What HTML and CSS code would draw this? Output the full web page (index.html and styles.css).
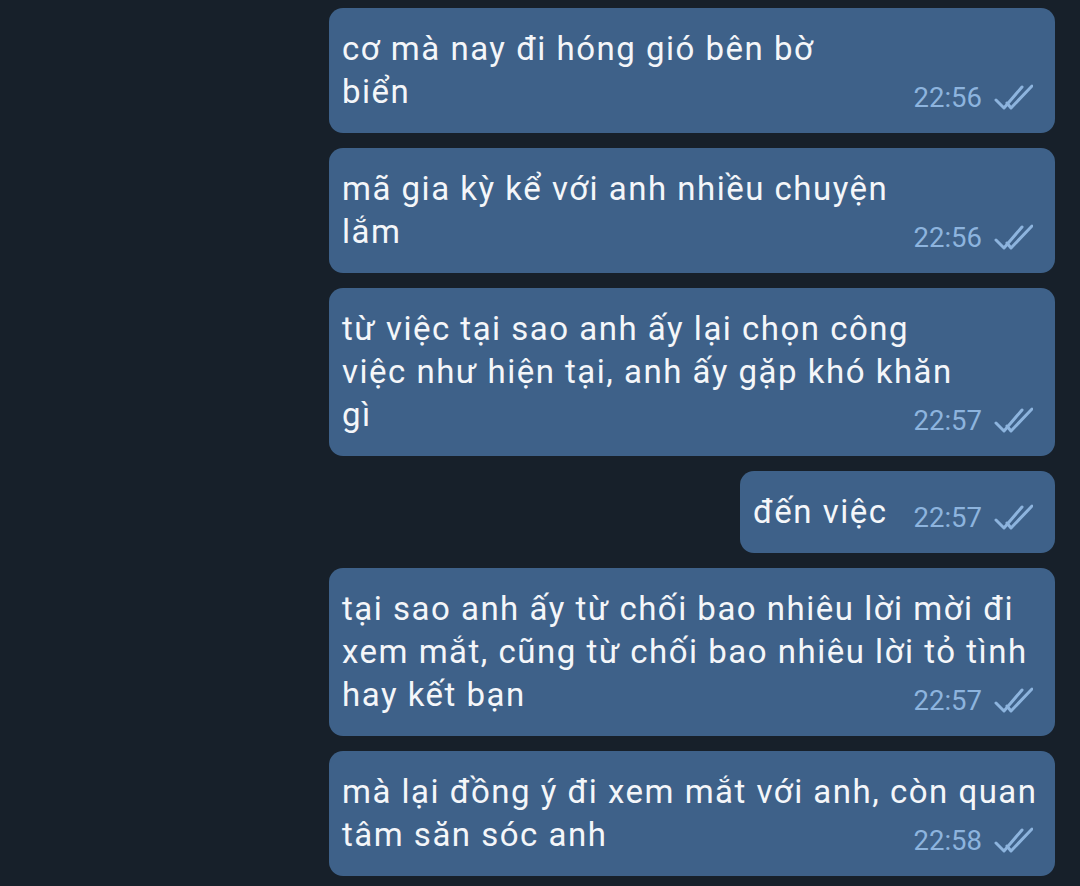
FILE: index.html
```html
<!DOCTYPE html>
<html lang="vi">
<head>
<meta charset="utf-8">
<title>Chat</title>
<link rel="stylesheet" href="styles.css">
</head>
<body>
<div class="chat">
  <div class="msg wide">
    <div class="text"><span class="line">cơ mà nay đi hóng gió bên bờ</span><span class="line">biển</span></div>
    <div class="meta"><span class="time">22:56</span><svg class="ticks" viewBox="0 0 40 26" width="40" height="26"><path d="M3 16 L11 24 L29 3 M14 19 L18 24 L39 2"/></svg></div>
  </div>
  <div class="msg wide">
    <div class="text"><span class="line">mã gia kỳ kể với anh nhiều chuyện</span><span class="line">lắm</span></div>
    <div class="meta"><span class="time">22:56</span><svg class="ticks" viewBox="0 0 40 26" width="40" height="26"><path d="M3 16 L11 24 L29 3 M14 19 L18 24 L39 2"/></svg></div>
  </div>
  <div class="msg wide">
    <div class="text"><span class="line">từ việc tại sao anh ấy lại chọn công</span><span class="line">việc như hiện tại, anh ấy gặp khó khăn</span><span class="line">gì</span></div>
    <div class="meta"><span class="time">22:57</span><svg class="ticks" viewBox="0 0 40 26" width="40" height="26"><path d="M3 16 L11 24 L29 3 M14 19 L18 24 L39 2"/></svg></div>
  </div>
  <div class="msg short">
    <div class="text"><span class="line">đến việc</span></div>
    <div class="meta"><span class="time">22:57</span><svg class="ticks" viewBox="0 0 40 26" width="40" height="26"><path d="M3 16 L11 24 L29 3 M14 19 L18 24 L39 2"/></svg></div>
  </div>
  <div class="msg wide">
    <div class="text"><span class="line">tại sao anh ấy từ chối bao nhiêu lời mời đi</span><span class="line">xem mắt, cũng từ chối bao nhiêu lời tỏ tình</span><span class="line">hay kết bạn</span></div>
    <div class="meta"><span class="time">22:57</span><svg class="ticks" viewBox="0 0 40 26" width="40" height="26"><path d="M3 16 L11 24 L29 3 M14 19 L18 24 L39 2"/></svg></div>
  </div>
  <div class="msg wide">
    <div class="text"><span class="line">mà lại đồng ý đi xem mắt với anh, còn quan</span><span class="line">tâm săn sóc anh</span></div>
    <div class="meta"><span class="time">22:58</span><svg class="ticks" viewBox="0 0 40 26" width="40" height="26"><path d="M3 16 L11 24 L29 3 M14 19 L18 24 L39 2"/></svg></div>
  </div>
</div>
</body>
</html>
```
FILE: styles.css
```css
html, body {
  margin: 0;
  padding: 0;
  background: #17202a;
  height: 100%;
  overflow: hidden;
}
.chat {
  display: flex;
  flex-direction: column;
  align-items: flex-end;
  gap: 15px;
  padding: 8px 25px 0 0;
  font-family: Roboto, "Noto Sans", sans-serif;
}
.msg {
  background: #3e6189;
  border-radius: 14px;
  padding: 19px 22px 20px 13px;
  box-sizing: border-box;
  color: #f4f6f9;
}
.msg.wide {
  width: 726px;
  display: flex;
  flex-direction: column;
}
.msg.short {
  display: flex;
  flex-direction: row;
  align-items: flex-end;
  gap: 26px;
}
.text {
  font-size: 33px;
  line-height: 43px;
  letter-spacing: 1.5px;
}
.line {
  display: block;
  white-space: nowrap;
}
.meta {
  display: flex;
  align-items: flex-start;
  gap: 11px;
  height: 30px;
  color: #8db4de;
}
.wide .meta {
  align-self: flex-end;
  margin-top: -30px;
}
.time {
  font-size: 27.5px;
  line-height: 30px;
}
.ticks {
  margin-top: 1px;
  fill: none;
  stroke: #8db4de;
  stroke-width: 3;
  stroke-linecap: round;
  stroke-linejoin: round;
}
```
